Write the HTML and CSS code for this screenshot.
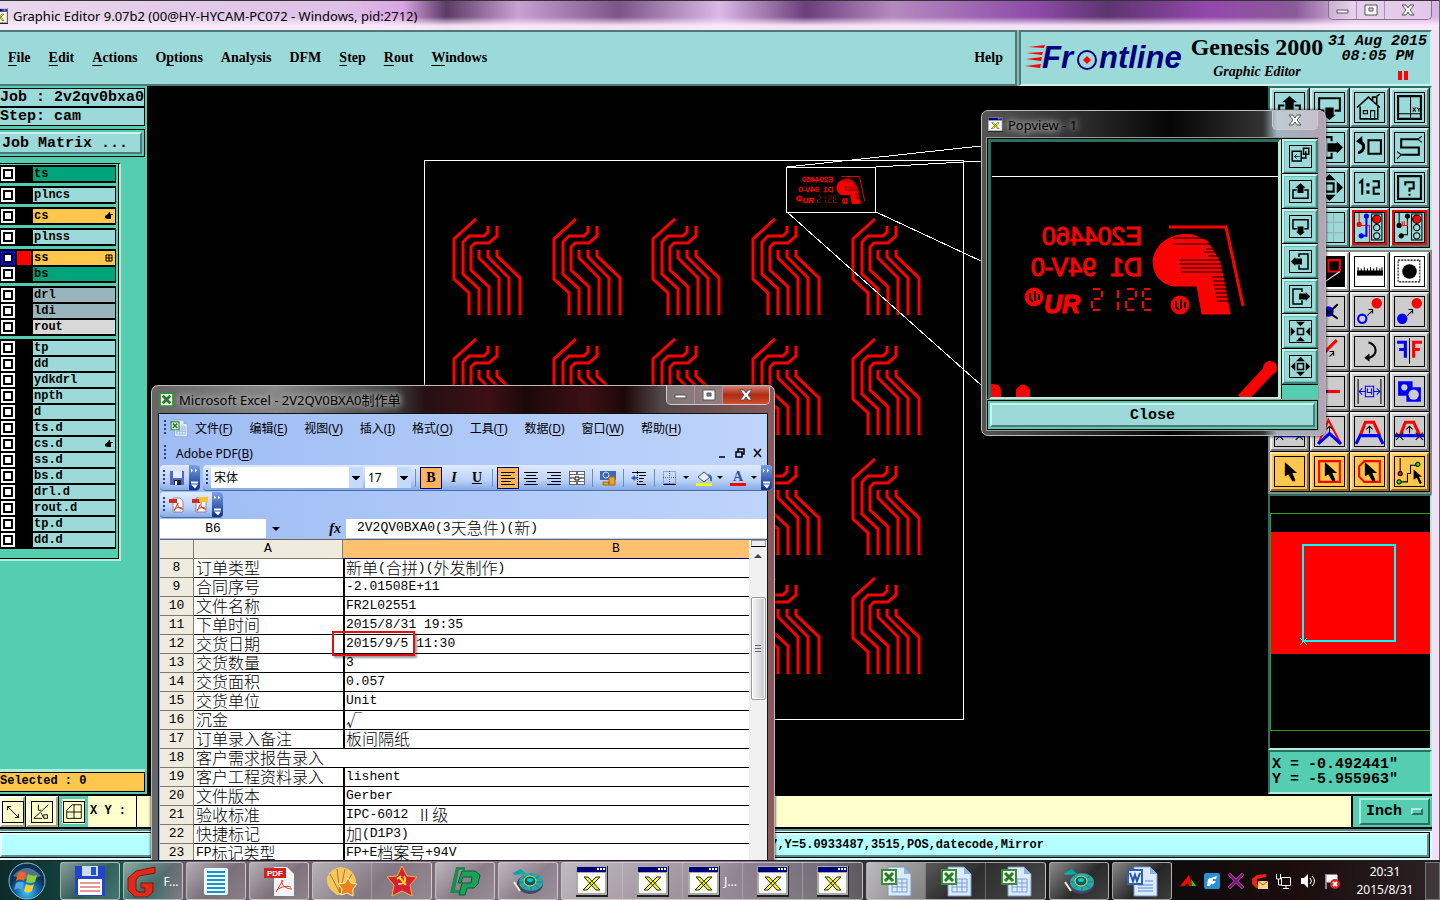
FILE: index.html
```html
<!DOCTYPE html>
<html lang="en">
<head>
    <meta charset="UTF-8">
    <meta name="viewport" content="width=device-width, initial-scale=1.0">
    <title>Graphic Editor 9.07b2</title>
    <link rel="stylesheet" href="styles.css">
</head>
<body>
    <!-- shared icons -->
    <svg class="defs" aria-hidden="true">
        <symbol id="pan-up" viewBox="0 0 28 28"><path d="M9 12H4v11h20V12h-5" fill="none" stroke="#000" stroke-width="2"/><path d="M14 3l7 6h-3v7h-8V9H7z"/></symbol>
        <symbol id="pan-down" viewBox="0 0 28 28"><path d="M9 17H4V5h20v12h-5" fill="none" stroke="#000" stroke-width="2"/><path d="M14 26l6-5h-2v-7h-8v7H8z"/></symbol>
        <symbol id="pan-left" viewBox="0 0 28 28"><path d="M12 8V4h12v20H12v-5" fill="none" stroke="#000" stroke-width="2"/><path d="M1 14l6-6v2h9v8H7v2z"/></symbol>
        <symbol id="pan-right" viewBox="0 0 28 28"><path d="M16 8V4H4v20h12v-5" fill="none" stroke="#000" stroke-width="2"/><path d="M27 14l-6-6v2h-9v8h9v2z"/></symbol>
        <symbol id="zoom-in" viewBox="0 0 28 28"><path d="M10 10h8v8h-8z" fill="none" stroke="#000" stroke-width="2"/><path d="M8 1h12l-6 6zM8 27h12l-6-6zM1 8v12l6-6zM27 8v12l-6-6z"/></symbol>
        <symbol id="zoom-out" viewBox="0 0 28 28"><path d="M10 10h8v8h-8z" fill="none" stroke="#000" stroke-width="2"/><path d="M8 7h12l-6-6zM8 21h12l-6 6zM7 8v12l-6-6zM21 8v12l6-6z"/></symbol>
        <symbol id="copy-view" viewBox="0 0 28 28"><path d="M3 7h12v13H3zM18 3h7v8h-7zM15 16h6v-9" fill="none" stroke="#000" stroke-width="2"/><path d="M6 14h7M9 11l-3 3 3 3" fill="none" stroke="#000"/></symbol>
        <symbol id="house" viewBox="0 0 28 28"><path d="M2 14L13 4l11 10M5 13v12h17V13M17 7V4h4v7M21 3l3-2" fill="none" stroke="#000" stroke-width="1.500"/><path d="M8 17h4v3H8zM15 17h4v8h-4z" fill="none" stroke="#000"/></symbol>
        <symbol id="xy-window" viewBox="0 0 28 28"><path d="M3 3h22v22H3z" fill="none" stroke="#000" stroke-width="2"/><path d="M15 3v22M3 20h22M17 14l3 4M20 14l-3 4M21 14l2 2 2-2M23 16v2" fill="none" stroke="#000"/></symbol>
        <symbol id="zoom-prev" viewBox="0 0 28 28"><path d="M13 7h12v13H13z" fill="none" stroke="#000" stroke-width="2"/><path d="M3 8c6-1 8 10 0 11M3 8h4" fill="none" stroke="#000" stroke-width="3"/><path d="M1 8l6-5v9z"/></symbol>
        <symbol id="serpentine" viewBox="0 0 28 28"><path d="M22 6H6v8h17v7H6" fill="none" stroke="#000" stroke-width="2"/><path d="M22 6l4-3M22 6l4 3M6 21l-4-3M6 21l-4 4" stroke="#000"/></symbol>
        <symbol id="ratio" viewBox="0 0 28 28"><path d="M4 10l3-3v14M17 8h6v6h-5v6h6" fill="none" stroke="#000" stroke-width="2"/><path d="M11 10h3v3h-3zM11 17h3v3h-3z"/></symbol>
        <symbol id="help" viewBox="0 0 28 28"><path d="M3 3h22v22H3zM10 12V9h8v6h-4v3M13 21h2" fill="none" stroke="#000" stroke-width="2"/></symbol>
        <symbol id="grid" viewBox="0 0 28 28"><path d="M8 0v28M18 0v28M0 9h28M0 19h28" stroke="#9aa"/></symbol>
        <symbol id="lamp-a" viewBox="0 0 28 28"><path d="M4 0v12H14v16" fill="none" stroke="red"/><path d="M11 4v18H7" fill="none" stroke="blue" stroke-width="2"/><circle cx="4" cy="11" r="2.500" fill="red"/><circle cx="11" cy="3" r="2.500" fill="blue"/><circle cx="6" cy="22" r="2.500" fill="blue"/><path d="M16 1h10v25H16z" fill="none" stroke="#000"/><circle cx="21" cy="6" r="4" fill="red" stroke="#000"/><circle cx="21" cy="14" r="3" fill="none" stroke="#000"/><circle cx="21" cy="22" r="3" fill="none" stroke="#000"/></symbol>
        <symbol id="lamp-b" viewBox="0 0 28 28"><path d="M4 0v12M12 3v18H7" fill="none" stroke="#000"/><circle cx="4" cy="12" r="2.500"/><circle cx="12" cy="3" r="2.500"/><circle cx="6" cy="22" r="2.500"/><path d="M7 8v4h5V8M9 8v4" stroke="red" fill="none"/><path d="M16 1h10v25H16z" fill="none" stroke="#000"/><circle cx="21" cy="6" r="4" fill="red" stroke="#000"/><circle cx="21" cy="14" r="3" fill="none" stroke="#000"/><circle cx="21" cy="22" r="3" fill="none" stroke="#000"/></symbol>
        <symbol id="popup-view" viewBox="0 0 28 28"><path d="M0 0h28v28H0z"/><path d="M13 3h11v11H13z" fill="none" stroke="red" stroke-width="2"/><path d="M8 25l16-11" stroke="#fff"/></symbol>
        <symbol id="ruler" viewBox="0 0 28 28"><path d="M2 13h25v5H2z"/><path d="M3 10v4M6 11v3M9 10v4M12 11v3M15 10v4M18 11v3M21 10v4M24 11v3M26 10v4" stroke="#000"/></symbol>
        <symbol id="pad" viewBox="0 0 28 28"><path d="M3 3h21v21H3z" fill="none" stroke="#000" stroke-dasharray="2 1"/><circle cx="14" cy="14" r="7"/></symbol>
        <symbol id="erase" viewBox="0 0 28 28"><circle cx="13" cy="14" r="5" fill="blue"/><path d="M4 8l18 13M22 7L7 21" stroke="#000" stroke-width="2"/></symbol>
        <symbol id="move-a" viewBox="0 0 28 28"><circle cx="7" cy="21" r="4" fill="none" stroke="blue" stroke-width="2"/><circle cx="21" cy="6" r="5" fill="red"/><path d="M12 18l5-5M13 12h4v4" fill="none" stroke="#000"/></symbol>
        <symbol id="move-b" viewBox="0 0 28 28"><circle cx="7" cy="21" r="5" fill="blue"/><circle cx="21" cy="6" r="5" fill="red"/><path d="M12 18l5-5M13 12h4v4" fill="none" stroke="#000"/></symbol>
        <symbol id="stretch" viewBox="0 0 28 28"><path d="M3 21l9-9" stroke="blue" stroke-width="3"/><path d="M11 13l10-10" stroke="red" stroke-width="3"/><path d="M14 19l4-4M14 14h4v4" stroke="#000" fill="none"/></symbol>
        <symbol id="rotate" viewBox="0 0 28 28"><path d="M13 5c9 3 9 12 1 15h-3" fill="none" stroke="#000" stroke-width="2"/><path d="M9 20l5-4v8z"/></symbol>
        <symbol id="mirror" viewBox="0 0 28 28"><path d="M2 5h8v15M4 12h6" fill="none" stroke="blue" stroke-width="3"/><path d="M26 5h-8v15M24 12h-6" fill="none" stroke="red" stroke-width="3"/><path d="M14 1v25" stroke="#000"/></symbol>
        <symbol id="segment" viewBox="0 0 28 28"><path d="M4 14h11" stroke="blue" stroke-width="3"/><path d="M12 14h12" stroke="red" stroke-width="3"/></symbol>
        <symbol id="spacing" viewBox="0 0 28 28"><path d="M3 2v24M25 2v24" stroke="#000"/><path d="M4 14h6M18 14h6M7 11l-3 3 3 3M21 11l3 3-3 3M10 9h8v10h-8zM12 11v4h4M16 11v6" fill="none" stroke="blue"/></symbol>
        <symbol id="merge" viewBox="0 0 28 28"><path d="M3 4h14v6h8v14H11v-6H3z" fill="blue"/><circle cx="9" cy="10" r="3" fill="#ccc"/><circle cx="18" cy="17" r="5" fill="#ccc"/></symbol>
        <symbol id="trace-a" viewBox="0 0 28 28"><path d="M3 26L13 3l12 23" fill="none" stroke="red" stroke-width="2"/><path d="M3 26l11-10 11 10" fill="none" stroke="blue" stroke-width="3"/><path d="M14 9v6M11 12l3-3 3 3" fill="none" stroke="#000"/></symbol>
        <symbol id="trace-b" viewBox="0 0 28 28"><path d="M5 18l5-13h8l6 13" fill="none" stroke="red" stroke-width="3"/><path d="M1 26l4-8h18l4 8" fill="none" stroke="blue" stroke-width="3"/><path d="M14 9v7M11 12l3-3 3 3" fill="none" stroke="#000"/></symbol>
        <symbol id="trace-c" viewBox="0 0 28 28"><path d="M5 18l5-13h8l6 13" fill="none" stroke="red" stroke-width="3"/><path d="M0 18h28" stroke="blue" stroke-width="3"/><path d="M14 9v7M11 12l3-3 3 3M1 15l7 7M8 15l-7 7M20 15l7 7M27 15l-7 7" fill="none" stroke="#000"/></symbol>
        <symbol id="cursor" viewBox="0 0 28 28"><path d="M10 6v12l3-2 4 7h2v-1l-3-7h4z" stroke="#000"/></symbol>
        <symbol id="cursor-rect" viewBox="0 0 28 28"><path d="M4 4h20v20H4z" fill="none" stroke="red" stroke-width="2"/><use href="#cursor"/></symbol>
        <symbol id="cursor-poly" viewBox="0 0 28 28"><path d="M9 4h15v20H9l-5-5V9z" fill="none" stroke="red" stroke-width="2"/><use href="#cursor"/></symbol>
        <symbol id="cursor-net" viewBox="0 0 28 28"><path d="M5 1v15M4 24h8v-8h3V8h7" fill="none" stroke="#000"/><circle cx="5" cy="16" r="2" fill="red" stroke="#000"/><circle cx="4" cy="24" r="2" fill="#0f0" stroke="#000"/><circle cx="22" cy="7" r="2" fill="#0f0" stroke="#000"/><path d="M18 12v10l3-2 3 6 2-1-3-6h3z"/></symbol>
        <symbol id="x-app" viewBox="0 0 32 30"><path d="M0 0h32v30H0z" fill="#aaa"/><path d="M32 0v30H0" fill="none" stroke="#222" stroke-width="2"/><path d="M1 1h29v5H1z" fill="#00007c"/><path d="M21 2h2v2h-2zM24 2h2v2h-2zM27 2h2v2h-2z" fill="#fff"/><path d="M2 7h27v20H2z" fill="#fff"/><path d="M8 11h4l12 13h-4zM20 11h4L11 24H7z" fill="#ff0" stroke="#222"/></symbol>
        <symbol id="excel-app" viewBox="0 0 32 32"><path d="M8 2h16l7 7v22H8z" fill="#dcebfb" stroke="#7796c4"/><path d="M24 2v7h7z" fill="#8fb2df"/><path d="M12 14h15v13H12zM12 18h15M12 22h15M17 14v13M22 14v13" fill="none" stroke="#7aa0d8"/><path d="M1 4h16v16H1z" fill="#3c8a3c"/><path d="M3 6h12v12H3z" fill="#e8f5e4"/><path d="M5 8l8 8M13 8l-8 8" stroke="#2a7a2c" stroke-width="3"/></symbol>
        <symbol id="pot-app" viewBox="0 0 32 32"><ellipse cx="18" cy="19" rx="13" ry="10" fill="#446"/><ellipse cx="19" cy="17" rx="12" ry="9" fill="#2aa7a7"/><path d="M19 8v18M7 17h24M11 11l16 12M27 11L11 23" stroke="#1a8088"/><ellipse cx="18" cy="16" rx="6" ry="5" fill="#075a66" stroke="#e8e04a"/><ellipse cx="18" cy="15" rx="3" ry="2" fill="#0cc"/><path d="M1 8l8-4 5 5-12 1z" fill="#0aa"/><path d="M2 17l6 9" stroke="#eec" stroke-width="2"/></symbol>
        <symbol id="pdf-page" viewBox="0 0 16 16"><path d="M4 1h7l3 3v11H4z" fill="#fff" stroke="#889"/><path d="M0 2h8v4H0z" fill="#d22"/><path d="M5 14l4-8M9 6c-1 4 2 6 5 6M5 13c3-3 6-3 8-2" fill="none" stroke="#d22"/></symbol>
        <symbol id="hand" viewBox="0 0 8 8"><path d="M0 4l3-2 1-2h1v2h3v1H6v4H2L0 6z"/></symbol>
        <symbol id="more" viewBox="0 0 11 24"><path d="M2 3l2 2-2 2zM6 3l2 2-2 2zM2 16h7v2H2zM2 19h7l-3 4z" fill="#fff"/></symbol>
        <symbol id="trace" viewBox="452 218 72 98"><g fill="none" stroke="red" stroke-width="3"><path d="M476 219l-22 20v40l15 14v22"/><path d="M488 226v6l-4 4h-15l-6 6v32l16 15v26"/><path d="M497 226v10l-8 7h-14l-4 4v23l18 17v28"/><path d="M479 250v8l20 20v37"/><path d="M488 250v7l21 21v37"/><path d="M497 250v6l23 22v37"/></g></symbol>
        <symbol id="mark" viewBox="1020 222 230 96">
            <g fill="red" stroke="red">
                <text class="mark-text" transform="translate(1142 245) scale(-1 1)">E204460</text>
                <text class="mark-text" transform="translate(1142 276) scale(-1 1)">D1&#160; 94V-0</text>
                <text class="mark-ur" x="1044" y="313">UR</text>
                <path d="M1169 227h57l17 79" fill="none" stroke-width="3"/>
                <path d="M1175 236q8-3 18-1l14 6 6 9 7 12 5 25 5 27h-28l-5-28h-24q-20-4-20-26 3-18 22-24z"/>
                <circle cx="1034" cy="297" r="9"/><circle cx="1180" cy="305" r="9"/>
                <path d="M1093 289h7M1102 291v6M1094 299h6M1092 301v7M1093 310h7M1118 290v8M1118 302v8M1127 289h7M1136 291v6M1128 299h6M1126 301v7M1127 310h7M1144 289h6M1143 291v6M1145 299h6M1143 301v7M1144 310h7" fill="none" stroke-width="2"/>
            </g>
            <path d="M1173 238h30M1174 244h36M1206 249h12M1204 252h16M1208 256h14M1179 260h42M1179 264h43M1181 268h42M1181 272h42M1212 277h14M1213 281h14M1213 285h15M1214 289h15M1215 293h15M1216 297h15M1217 301h15" stroke="#000" stroke-width="1"/>
            <path d="M1030 293v6l3 3M1035 291v10M1039 294v6M1176 301v6l3 3M1181 299v10M1185 302v6" fill="none" stroke="#000" stroke-width="2"/>
        </symbol>
    </svg>

    <main class="editor">
        <header class="titlebar">
            <svg class="title-icon"><use href="#x-app"/></svg>
            <span>Graphic Editor 9.07b2 (00@HY-HYCAM-PC072 - Windows, pid:2712)</span>
            <div class="win-buttons">
                <button aria-label="Minimize"><svg viewBox="0 0 14 12"><path d="M1 6h11v3H1z"/></svg></button>
                <button aria-label="Maximize"><svg viewBox="0 0 14 12"><path fill-rule="evenodd" d="M1 1h12v10H1zM5 4h4v3H5z"/></svg></button>
                <button class="wide" aria-label="Close"><svg viewBox="0 0 14 12"><path d="M1 1h4l2 3 2-3h4L9 6l4 5H9L7 8l-2 3H1l4-5z"/></svg></button>
            </div>
        </header>
        <div class="top">
            <nav class="menubar">
                <a href="#"><u>F</u>ile</a><a href="#"><u>E</u>dit</a><a href="#"><u>A</u>ctions</a><a href="#">O<u>p</u>tions</a><a href="#">Analysis</a><a href="#">DFM</a><a href="#"><u>S</u>tep</a><a href="#"><u>R</u>out</a><a href="#"><u>W</u>indows</a>
                <a class="menu-help" href="#">Help</a>
            </nav>
            <section class="brand">
                <svg class="logo" viewBox="0 0 162 30">
                    <path d="M3 4l17-2-1 3zM1 10l17-1-1 3zM1 16l16-2-1 4zM0 23l16-2-1 4z" fill="red"/>
                    <text x="17" y="25">Fr</text><text x="74" y="25">ntline</text>
                    <circle cx="62" cy="17" r="9" fill="none" stroke="#00007c" stroke-width="2"/>
                    <path d="M62 13l4 4-4 4-4-4z" fill="red"/>
                </svg>
                <div class="product">
                    <strong>Genesis 2000</strong>
                    <em>Graphic Editor</em>
                </div>
                <div class="clock">
                    <span>31 Aug 2015</span>
                    <span>08:05 PM</span>
                    <i class="pause"></i>
                </div>
            </section>
        </div>

        <div class="workspace">
            <aside class="left">
                <div class="job">Job : 2v2qv0bxa0</div>
                <div class="job">Step: cam</div>
                <div class="matrix"><button>Job Matrix ...</button></div>
                <div class="layers">
                    <ul class="group">
                        <li><input type="checkbox" id="ts"><i></i><label class="green" for="ts">ts</label></li>
                    </ul>
                    <ul class="group">
                        <li><input type="checkbox" id="plncs"><i></i><label for="plncs">plncs</label></li>
                    </ul>
                    <ul class="group">
                        <li><input type="checkbox" id="cs"><i></i><label class="gold" for="cs">cs<svg><use href="#hand"/></svg></label></li>
                    </ul>
                    <ul class="group">
                        <li><input type="checkbox" id="plnss"><i></i><label for="plnss">plnss</label></li>
                    </ul>
                    <ul class="group">
                        <li><input type="checkbox" id="ss" checked><i class="red"></i><label class="gold" for="ss">ss<svg viewBox="0 0 8 8"><path d="M1 1h6v6H1zM4 1v6M1 4h6" fill="none" stroke="#000"/></svg></label></li>
                        <li><input type="checkbox" id="bs"><i></i><label class="green" for="bs">bs</label></li>
                    </ul>
                    <ul class="group">
                        <li><input type="checkbox" id="drl"><i></i><label class="slate" for="drl">drl</label></li>
                        <li><input type="checkbox" id="ldi"><i></i><label class="slate" for="ldi">ldi</label></li>
                        <li><input type="checkbox" id="rout"><i></i><label class="silver" for="rout">rout</label></li>
                    </ul>
                    <ul class="group">
                        <li><input type="checkbox" id="tp"><i></i><label for="tp">tp</label></li>
                        <li><input type="checkbox" id="dd"><i></i><label for="dd">dd</label></li>
                        <li><input type="checkbox" id="ydkdrl"><i></i><label for="ydkdrl">ydkdrl</label></li>
                        <li><input type="checkbox" id="npth"><i></i><label for="npth">npth</label></li>
                        <li><input type="checkbox" id="d"><i></i><label for="d">d</label></li>
                        <li><input type="checkbox" id="ts-d"><i></i><label for="ts-d">ts.d</label></li>
                        <li><input type="checkbox" id="cs-d"><i></i><label for="cs-d">cs.d<svg><use href="#hand"/></svg></label></li>
                        <li><input type="checkbox" id="ss-d"><i></i><label for="ss-d">ss.d</label></li>
                        <li><input type="checkbox" id="bs-d"><i></i><label for="bs-d">bs.d</label></li>
                        <li><input type="checkbox" id="drl-d"><i></i><label for="drl-d">drl.d</label></li>
                        <li><input type="checkbox" id="rout-d"><i></i><label for="rout-d">rout.d</label></li>
                        <li><input type="checkbox" id="tp-d"><i></i><label for="tp-d">tp.d</label></li>
                        <li><input type="checkbox" id="dd-d"><i></i><label for="dd-d">dd.d</label></li>
                    </ul>
                </div>
                <div class="selected">Selected : 0</div>
            </aside>

            <section class="canvas">
                <svg viewBox="147 86 1121 708" preserveAspectRatio="xMinYMin slice">
                    <g class="panel-row">
                        <use href="#trace" x="452" y="218" width="72" height="98"/><use href="#trace" x="552" y="218" width="72" height="98"/><use href="#trace" x="651" y="218" width="72" height="98"/><use href="#trace" x="751" y="218" width="72" height="98"/><use href="#trace" x="851" y="218" width="72" height="98"/>
                    </g>
                    <g class="panel-row">
                        <use href="#trace" x="452" y="338" width="72" height="98"/><use href="#trace" x="552" y="338" width="72" height="98"/><use href="#trace" x="651" y="338" width="72" height="98"/><use href="#trace" x="751" y="338" width="72" height="98"/><use href="#trace" x="851" y="338" width="72" height="98"/>
                    </g>
                    <g class="panel-row">
                        <use href="#trace" x="751" y="458" width="72" height="98"/><use href="#trace" x="851" y="458" width="72" height="98"/>
                        <use href="#trace" x="751" y="577" width="72" height="98"/><use href="#trace" x="851" y="577" width="72" height="98"/>
                    </g>
                    <use href="#mark" x="795" y="175" width="72" height="30"/>
                    <g fill="none" stroke="#fff" shape-rendering="crispEdges">
                        <path d="M424.500 160.500h539v559h-539z"/>
                        <path d="M786.500 167.500h89v45h-89z"/>
                        <path d="M787 167l194-21M876 167l105-6M876 212l105 49M787 212l194 173"/>
                    </g>
                </svg>
            </section>

            <aside class="right">
                <div class="tools cyan">
                    <button aria-label="Pan up"><svg><use href="#pan-up"/></svg></button>
                    <button aria-label="Pan down"><svg><use href="#pan-down"/></svg></button>
                    <button aria-label="Home"><svg><use href="#house"/></svg></button>
                    <button aria-label="Window XY"><svg><use href="#xy-window"/></svg></button>
                    <button aria-label="Pan left"><svg><use href="#pan-left"/></svg></button>
                    <button aria-label="Pan right"><svg><use href="#pan-right"/></svg></button>
                    <button aria-label="Previous zoom"><svg><use href="#zoom-prev"/></svg></button>
                    <button aria-label="Serpentine"><svg><use href="#serpentine"/></svg></button>
                    <button aria-label="Zoom in"><svg><use href="#zoom-in"/></svg></button>
                    <button aria-label="Zoom out"><svg><use href="#zoom-out"/></svg></button>
                    <button aria-label="Scale 1:2"><svg><use href="#ratio"/></svg></button>
                    <button aria-label="Help"><svg><use href="#help"/></svg></button>
                    <button aria-label="Snap"><svg><use href="#grid"/></svg></button>
                    <button aria-label="Grid"><svg><use href="#grid"/></svg></button>
                    <button class="alert" aria-label="Nets"><svg><use href="#lamp-a"/></svg></button>
                    <button class="alert" aria-label="Spacing check"><svg><use href="#lamp-b"/></svg></button>
                </div>
                <div class="tools gray">
                    <button class="white" aria-label="Popup"><svg><use href="#popup-view"/></svg></button>
                    <button class="white" aria-label="Popup view"><svg><use href="#popup-view"/></svg></button>
                    <button class="white" aria-label="Measure"><svg><use href="#ruler"/></svg></button>
                    <button class="white" aria-label="Feature"><svg><use href="#pad"/></svg></button>
                    <button aria-label="Delete"><svg><use href="#erase"/></svg></button>
                    <button aria-label="Erase"><svg><use href="#erase"/></svg></button>
                    <button aria-label="Copy"><svg><use href="#move-a"/></svg></button>
                    <button aria-label="Move"><svg><use href="#move-b"/></svg></button>
                    <button aria-label="Stretch line"><svg><use href="#stretch"/></svg></button>
                    <button aria-label="Stretch"><svg><use href="#stretch"/></svg></button>
                    <button aria-label="Rotate"><svg><use href="#rotate"/></svg></button>
                    <button aria-label="Mirror"><svg><use href="#mirror"/></svg></button>
                    <button aria-label="Break"><svg><use href="#segment"/></svg></button>
                    <button aria-label="Segment"><svg><use href="#segment"/></svg></button>
                    <button aria-label="Spacing"><svg><use href="#spacing"/></svg></button>
                    <button aria-label="Merge"><svg><use href="#merge"/></svg></button>
                    <button aria-label="Angle"><svg><use href="#trace-c"/></svg></button>
                    <button aria-label="Corner"><svg><use href="#trace-a"/></svg></button>
                    <button aria-label="Parallel"><svg><use href="#trace-b"/></svg></button>
                    <button aria-label="Slide"><svg><use href="#trace-c"/></svg></button>
                    <button class="gold" aria-label="Select"><svg><use href="#cursor"/></svg></button>
                    <button class="gold" aria-label="Select in frame"><svg><use href="#cursor-rect"/></svg></button>
                    <button class="gold" aria-label="Select in polygon"><svg><use href="#cursor-poly"/></svg></button>
                    <button class="gold" aria-label="Select net"><svg><use href="#cursor-net"/></svg></button>
                </div>
                <div class="overview">
                    <svg viewBox="0 0 160 252" preserveAspectRatio="none">
                        <path d="M0 36h160v122H0z" fill="red"/>
                        <path d="M160 17.500H.5v217H160" fill="none" stroke="#3c9a0a"/>
                        <path d="M33 49h92v96H33z" fill="none" stroke="#0ff" stroke-width="2"/>
                        <path d="M30 142l7 7M37 142l-7 7" stroke="#0ff"/>
                    </svg>
                </div>
                <div class="coords"><span>X = -0.492441"</span><span>Y = -5.955963"</span></div>
            </aside>
        </div>

        <div class="command">
            <button aria-label="Vector"><svg viewBox="0 0 22 22"><path d="M5 5l12 12M5 9V5h4M17 13v4h-4" fill="none" stroke="#000"/></svg></button>
            <button aria-label="Angle"><svg viewBox="0 0 22 22"><path d="M2 18L18 3M2 18h9M7 3v6h3M10 12l3 6M13 14h4v4h-4z" fill="none" stroke="#000"/></svg></button>
            <button class="on" aria-label="Grid snap"><svg viewBox="0 0 22 22"><path d="M3 18V9l6-6h10v15zM11 3v15M3 11h16" fill="none" stroke="#000"/></svg></button>
            <label for="xy">X Y :</label>
            <input id="xy" type="text">
            <div class="units">
                <button>Inch <i></i></button>
            </div>
        </div>
        <div class="status"><output>17,Y=5.0933487,3515,POS,datecode,Mirror</output></div>
    </main>

    <section class="popview">
        <header>
            <svg class="app-icon"><use href="#x-app"/></svg>
            <span>Popview - 1</span>
            <button class="glass-close" aria-label="Close popview"><svg viewBox="0 0 14 12"><path d="M1 1h4l2 3 2-3h4L9 6l4 5H9L7 8l-2 3H1l4-5z"/></svg></button>
        </header>
        <div class="pop-body">
            <div class="pop-canvas">
                <svg viewBox="991 142 287 255" preserveAspectRatio="xMinYMin slice">
                    <path d="M992 176.500h286" stroke="#fff"/>
                    <use href="#mark" x="1020" y="222" width="230" height="96"/>
                    <path d="M991 397v-13q10-1 10 7v6zM1016 397v-7q7-11 14 0v7z" fill="red"/>
                    <path d="M1242 399l28-30" stroke="red" stroke-width="11"/><circle cx="1270" cy="368" r="7" fill="red"/>
                </svg>
            </div>
            <div class="pop-tools">
                <button aria-label="Copy view"><svg><use href="#copy-view"/></svg></button>
                <button aria-label="Up"><svg><use href="#pan-up"/></svg></button>
                <button aria-label="Down"><svg><use href="#pan-down"/></svg></button>
                <button aria-label="Left"><svg><use href="#pan-left"/></svg></button>
                <button aria-label="Right"><svg><use href="#pan-right"/></svg></button>
                <button aria-label="In"><svg><use href="#zoom-in"/></svg></button>
                <button aria-label="Out"><svg><use href="#zoom-out"/></svg></button>
            </div>
        </div>
        <div class="pop-close"><button>Close</button></div>
    </section>

    <section class="excel" lang="zh-CN">
        <header>
            <svg class="app-icon" viewBox="0 0 16 16"><path d="M0 0h16v16H0z" fill="#3c8a3c"/><path d="M2 2h12v12H2z" fill="#e8f5e4"/><path d="M4 4l8 8M12 4l-8 8" stroke="#2a7a2c" stroke-width="3"/></svg>
            <span>Microsoft Excel - 2V2QV0BXA0制作单</span>
            <div class="win-buttons">
                <button aria-label="最小化"><svg viewBox="0 0 14 12"><path d="M1 6h11v3H1z"/></svg></button>
                <button aria-label="最大化"><svg viewBox="0 0 14 12"><path fill-rule="evenodd" d="M1 1h12v10H1zM5 4h4v3H5z"/></svg></button>
                <button class="wide" aria-label="关闭"><svg viewBox="0 0 14 12"><path d="M1 1h4l2 3 2-3h4L9 6l4 5H9L7 8l-2 3H1l4-5z"/></svg></button>
            </div>
        </header>
        <div class="excel-body">
            <nav class="excel-menu">
                <i class="grip"></i>
                <svg class="book" viewBox="0 0 32 32"><use href="#excel-app"/></svg>
                <a href="#">文件(<u>F</u>)</a><a href="#">编辑(<u>E</u>)</a><a href="#">视图(<u>V</u>)</a><a href="#">插入(<u>I</u>)</a><a href="#">格式(<u>O</u>)</a><a href="#">工具(<u>T</u>)</a><a href="#">数据(<u>D</u>)</a><a href="#">窗口(<u>W</u>)</a><a href="#">帮助(<u>H</u>)</a>
            </nav>
            <div class="excel-menu second">
                <i class="grip"></i>
                <a href="#">Adobe PDF(<u>B</u>)</a>
                <svg class="mdi" viewBox="0 0 46 12"><path d="M3 10h6M20 5h6v5h-6zM22 5V2h6v5h-2" fill="none" stroke="#000" stroke-width="1.500"/><path d="M38 2l7 8M45 2l-7 8" stroke="#000" stroke-width="1.500"/></svg>
            </div>
            <div class="bars">
                <div class="bar">
                    <i class="grip"></i>
                    <button aria-label="保存"><svg viewBox="0 0 16 16"><path d="M1 1h14v14H1z" fill="#5566c8"/><path d="M4 1h9v7H4z" fill="#e6ecff"/><path d="M5 10h7v5H5z" fill="#223"/><path d="M6 11h2v4H6z" fill="#fff"/></svg></button>
                    <svg class="more"><use href="#more"/></svg>
                </div>
                <div class="bar grow">
                    <i class="grip"></i>
                    <select class="font" aria-label="字体"><option>宋体</option></select>
                    <select class="size" aria-label="字号"><option>17</option></select>
                    <i class="sep"></i>
                    <button class="on serif"><b>B</b></button>
                    <button class="serif"><em>I</em></button>
                    <button class="serif"><u>U</u></button>
                    <i class="sep"></i>
                    <button class="on" aria-label="左对齐"><svg viewBox="0 0 16 16"><path d="M1 2.500h14M1 5.500h10M1 8.500h14M1 11.500h10M1 14.500h14" stroke="#000"/></svg></button>
                    <button aria-label="居中"><svg viewBox="0 0 16 16"><path d="M1 2.500h14M3 5.500h10M1 8.500h14M3 11.500h10M1 14.500h14" stroke="#000"/></svg></button>
                    <button aria-label="右对齐"><svg viewBox="0 0 16 16"><path d="M1 2.500h14M5 5.500h10M1 8.500h14M5 11.500h10M1 14.500h14" stroke="#000"/></svg></button>
                    <button aria-label="合并居中"><svg viewBox="0 0 16 16"><path d="M0 1h16v14H0z" fill="#667"/><path d="M1 2h6v2H1zM9 2h6v2H9zM1 12h6v2H1zM9 12h6v2H9zM1 5h14v6H1z" fill="#fff"/><path d="M1 8h4M11 8h4M6 7h4v3H6z" fill="none" stroke="#000"/></svg></button>
                    <i class="sep"></i>
                    <button aria-label="货币"><svg viewBox="0 0 16 16"><path d="M0 1h16v9H0z" fill="#3b69b5"/><circle cx="6" cy="5" r="3" fill="none" stroke="#cde"/><path d="M9 7h6v8H9zM3 12h6v3H3z" fill="#e7a32b" stroke="#a66a10"/></svg></button>
                    <i class="sep"></i>
                    <button aria-label="缩进"><svg viewBox="0 0 16 16"><path d="M1 2.500h14M8 5.500h7M8 8.500h5M8 11.500h4M6 14.500h9" stroke="#000"/><path d="M6.500 1v14" stroke="#000" stroke-dasharray="1 1"/><path d="M0 8l4-3v2h2v2H4v2z" fill="#2766c9"/></svg></button>
                    <i class="sep"></i>
                    <button class="drop" aria-label="边框"><svg viewBox="0 0 16 16"><path d="M1.500 1.500h12v12h-12zM7.500 1v13M1 7.500h13" fill="none" stroke="#668" stroke-dasharray="1 1"/><path d="M1 14.500h13" stroke="#000"/></svg></button>
                    <button class="drop" aria-label="填充颜色"><svg viewBox="0 0 16 16"><path d="M2 7l6-5 6 5-6 5z" fill="#e8eef8" stroke="#456"/><path d="M12 5q4 1 3 6" stroke="#36c" stroke-width="2" fill="none"/><path d="M0 13h16v3H0z" fill="#ff0"/></svg></button>
                    <button class="drop serif-a" aria-label="字体颜色"><span>A</span></button>
                    <svg class="more"><use href="#more"/></svg>
                </div>
            </div>
            <div class="bars">
                <div class="bar">
                    <i class="grip"></i>
                    <button aria-label="转换为 PDF"><svg><use href="#pdf-page"/></svg></button>
                    <button aria-label="转换并注释"><svg viewBox="0 0 16 16"><use href="#pdf-page"/><path d="M7 0h9v5h-5l-3 3V5H7z" fill="#f5c32c"/></svg></button>
                    <svg class="more"><use href="#more"/></svg>
                </div>
            </div>
            <div class="formula">
                <input class="name-box" type="text" value="B6" aria-label="名称框">
                <i class="arrow"></i>
                <em>fx</em>
                <div class="formula-text">2V2QV0BXA0(3<span class="zh">天急件</span>)(<span class="zh">新</span>)</div>
            </div>
            <div class="sheet">
                <table>
                    <thead><tr><th class="num"></th><th class="col-a">A</th><th class="col-b">B</th></tr></thead>
                    <tbody>
                        <tr><th>8</th><td><span class="zh">订单类型</span></td><td><span class="zh">新单</span>(<span class="zh">合拼</span>)(<span class="zh">外发制作</span>)</td></tr>
                        <tr><th>9</th><td><span class="zh">合同序号</span></td><td>-2.01508E+11</td></tr>
                        <tr><th>10</th><td><span class="zh">文件名称</span></td><td>FR2L02551</td></tr>
                        <tr><th>11</th><td><span class="zh">下单时间</span></td><td>2015/8/31 19:35</td></tr>
                        <tr><th>12</th><td><span class="zh">交货日期</span></td><td class="marked">2015/9/5 11:30</td></tr>
                        <tr><th>13</th><td><span class="zh">交货数量</span></td><td>3</td></tr>
                        <tr><th>14</th><td><span class="zh">交货面积</span></td><td>0.057</td></tr>
                        <tr><th>15</th><td><span class="zh">交货单位</span></td><td>Unit</td></tr>
                        <tr><th>16</th><td><span class="zh">沉金</span></td><td><span class="zh">√</span></td></tr>
                        <tr><th>17</th><td><span class="zh">订单录入备注</span></td><td><span class="zh">板间隔纸</span></td></tr>
                        <tr><th>18</th><td colspan="2"><span class="zh">客户需求报告录入</span></td></tr>
                        <tr><th>19</th><td><span class="zh">客户工程资料录入</span></td><td>lishent</td></tr>
                        <tr><th>20</th><td><span class="zh">文件版本</span></td><td>Gerber</td></tr>
                        <tr><th>21</th><td><span class="zh">验收标准</span></td><td>IPC-6012 <span class="zh">Ⅱ级</span></td></tr>
                        <tr><th>22</th><td><span class="zh">快捷标记</span></td><td><span class="zh">加</span>(D1P3)</td></tr>
                        <tr><th>23</th><td>FP<span class="zh">标记类型</span></td><td>FP+E<span class="zh">档案号</span>+94V</td></tr>
                    </tbody>
                </table>
                <div class="scroll"><i class="split"></i><i class="up"></i><i class="thumb"></i></div>
            </div>
        </div>
    </section>

    <footer class="taskbar">
        <button class="start" aria-label="Start"><svg viewBox="0 0 38 38"><defs><radialGradient id="orb" cx=".5" cy=".8"><stop offset="0" stop-color="#4cf"/><stop offset=".6" stop-color="#1668a8"/><stop offset="1" stop-color="#0b3358"/></radialGradient></defs><circle cx="19" cy="19" r="18" fill="url(#orb)" stroke="#8bc"/><path d="M5 14q14-16 28 0q-14 6-28 0z" fill="#fff" opacity=".3"/><path d="M10 11q4-3 8 0l-2 8q-4-3-8 0z" fill="#f0642c"/><path d="M20 12q4 3 9 1l-2 7q-4 2-9 0z" fill="#8ccf3c"/><path d="M8 21q4-3 8 0l-2 7q-4-3-8 0z" fill="#4ba7ee"/><path d="M18 22q4 3 8 0l-2 7q-4 3-8 0z" fill="#ffd02c"/></svg></button>
        <div class="task"><button aria-label="Save"><svg viewBox="0 0 32 32"><path d="M1 1h30v30H4l-3-3z" fill="#2244cc"/><path d="M8 1h16v10H8z" fill="#cde"/><path d="M17 2h5v8h-5z" fill="#25c"/><path d="M4 14h24v16H4z" fill="#fff"/><path d="M6 18h20M6 22h20M6 26h20" stroke="#c33"/></svg></button></div>
        <div class="task"><button><svg viewBox="0 0 32 32"><path d="M28 2v6L12 11l-3 4v10l3 2h6v-4h-4v-5h12v9l-6 5H8l-7-7V13l8-7z" fill="#e02a1a" stroke="#8a1008"/></svg>F...</button></div>
        <div class="task"><button aria-label="Notes"><svg viewBox="0 0 32 32"><rect x="4" y="3" width="24" height="27" rx="2" fill="#e8f8ff"/><path d="M7 7h18M7 11h18M7 15h18M7 19h18M7 23h18M7 27h18" stroke="#1b94c6" stroke-width="2"/></svg></button></div>
        <div class="task"><button aria-label="PDF"><svg viewBox="0 0 32 32"><path d="M11 2h13l7 7v22H11z" fill="#f4f4f4"/><path d="M1 3h22v10H1z" fill="#d41f1f"/><text class="pdf-tag" x="4" y="11">PDF</text><path d="M13 27l7-12M19 15c-1 7 6 9 10 9M14 25c5-4 10-4 14-3" fill="none" stroke="#e33"/></svg></button></div>
        <div class="task">
            <button aria-label="Shell"><svg viewBox="0 0 32 32"><path d="M15 2q14 2 15 15L18 30h-7Q-1 22 1 12 5 3 15 2z" fill="#f3c862"/><path d="M14 28L4 9M14 28L11 4M14 28L19 4M14 28L26 9" stroke="#b9741c"/><path d="M22 13l3 5 6 1-4 5v7l-6-3-6 2 1-6-4-5 7-1z" fill="#e88420" stroke="#fff0b0"/></svg></button>
            <button aria-label="Star"><svg viewBox="0 0 32 32"><path d="M16 1l5 10 10 1-7 8 2 11-10-5-10 5 2-11-7-8 10-1z" fill="#d81e3a" stroke="#f7b52c"/><path d="M13 12l7 8M18 11q4 8-6 8M11 14l4-3" fill="none" stroke="#fd2" stroke-width="2"/></svg></button>
        </div>
        <div class="task"><button aria-label="Foxit"><svg viewBox="0 0 32 32"><path d="M7 2h9v3h-6L6 25h6l-1 3H1z" fill="#1f8a50"/><path d="M13 6h13l5 4-2 9-4 4h-7l-2 7h-6l3-12h9l1-6h-9l-2 6h-3z" fill="#18a25a" stroke="#0a5a30"/></svg></button></div>
        <div class="task"><button aria-label="Genesis"><svg><use href="#pot-app"/></svg></button></div>
        <div class="task five">
            <button aria-label="Editor 1"><svg><use href="#x-app"/></svg></button>
            <button aria-label="Editor 2"><svg><use href="#x-app"/></svg></button>
            <button><svg><use href="#x-app"/></svg>J...</button>
            <button aria-label="Editor 4"><svg><use href="#x-app"/></svg></button>
            <button aria-label="Editor 5"><svg><use href="#x-app"/></svg></button>
        </div>
        <div class="task three">
            <button class="active" aria-label="Excel 1"><svg><use href="#excel-app"/></svg></button>
            <button aria-label="Excel 2"><svg><use href="#excel-app"/></svg></button>
            <button aria-label="Excel 3"><svg><use href="#excel-app"/></svg></button>
        </div>
        <div class="task dark"><button aria-label="Genesis tools"><svg><use href="#pot-app"/></svg></button></div>
        <div class="task dark"><button aria-label="Word"><svg viewBox="0 0 32 32"><path d="M8 2h16l7 7v22H8z" fill="#dcebfb" stroke="#7796c4"/><path d="M24 2v7h7z" fill="#8fb2df"/><path d="M12 20h15M12 23h15M12 26h15M19 16h8" stroke="#5a86c8"/><path d="M1 4h16v16H1z" fill="#2f5fb8"/><path d="M3 6h12v12H3z" fill="#e4edfb"/><path d="M4 8l3 8 2-6 2 6 3-8" fill="none" stroke="#2452a8" stroke-width="2"/></svg></button></div>
        <div class="tray">
            <svg viewBox="0 0 16 16"><path d="M0 13L9 2l1 4-5 7z" fill="red"/><path d="M9 2l3 11H9L7 7z" fill="red"/><path d="M11 6l5 7h-4z" fill="#0e0"/></svg>
            <svg viewBox="0 0 16 16"><rect width="16" height="16" rx="2" fill="#2a8fd0"/><path d="M4 6l9-3-1 3H9v2h3l-2 3H7l-1 2H3z" fill="#fff"/></svg>
            <svg viewBox="0 0 16 16"><path d="M1 1l14 14M15 1L1 15" stroke="#d9c" stroke-width="3"/><path d="M1 1l14 14M15 1L1 15" stroke="#808" stroke-width="2"/></svg>
            <svg viewBox="0 0 16 16"><path d="M14 1v3L5 6v6h4v3H4l-4-4V6l5-4z" fill="#e21"/><path d="M6 8h10v8H6z" fill="#f3d48a"/><path d="M6 8l5 4 5-4" fill="none" stroke="#a60"/></svg>
            <svg viewBox="0 0 16 16"><path d="M5.500 4.500h9v8h-9zM7 15.500h6M10 12v3M.5 1v5h4V1M2.500 6v6h3" fill="none" stroke="#fff"/></svg>
            <svg viewBox="0 0 16 16"><path d="M1 5h3l4-4v14l-4-4H1z" fill="#fff"/><path d="M10 5q3 3 0 6M12 3q5 5 0 10" fill="none" stroke="#fff"/></svg>
            <svg viewBox="0 0 16 16"><path d="M2 1v15M3 2h10v7H3z" fill="#fff" stroke="#fff"/><circle cx="11" cy="11" r="5" fill="#d22"/><path d="M9 9l4 4M13 9l-4 4" stroke="#fff" stroke-width="2"/></svg>
        </div>
        <div class="time"><span>20:31</span><span>2015/8/31</span></div>
        <button class="show-desktop" aria-label="Show desktop"></button>
    </footer>
</body>
</html>
```
FILE: styles.css
```css
*, *::before, *::after {
    box-sizing: border-box;
}

body {
    margin: 0;
    height: 100vh;
    display: flex;
    flex-direction: column;
    position: relative;
    overflow: hidden;
    background: #000;
    color: #000;
    font-family: "Noto Sans", "Noto Sans CJK SC", sans-serif;
    font-size: 12px;
}

button, input, select {
    margin: 0;
    padding: 0;
    border: 0;
    border-radius: 0;
    background: none;
    color: inherit;
    font: inherit;
}

a {
    color: inherit;
    text-decoration: none;
}

ul {
    list-style: none;
    margin: 0;
    padding: 0;
}

i {
    font-style: normal;
}

svg {
    display: block;
}

.defs {
    position: absolute;
    width: 0;
    height: 0;
}

/* main window */
.editor {
    flex: 1;
    min-height: 0;
    display: flex;
    flex-direction: column;
    padding-right: 7px;
    background: #f3e2f7;
    border-right: 1px solid #666;
}

.titlebar {
    height: 30px;
    display: flex;
    align-items: center;
    gap: 5px;
    margin-right: -7px;
    border-top: 1px solid #333;
    background: linear-gradient(to bottom, rgba(255, 255, 255, 0) 55%, rgba(250, 235, 250, 0.95) 85%), linear-gradient(to right, #e9d8ec 0, #ddc0e6 24%, #d9a4e4 28%, #5d3a66 31%, #c9a0d2 36%, #7c5488 43%, #dcb8e6 50%, #6b3e7c 56%, #b58ac0 62%, #8d4aa8 72%, #5e3470 77%, #9348ac 84%, #8a5a98 90%, #e0bfe8 94%, #d8b4e2 100%);
    font-size: 13px;
}

.title-icon {
    width: 16px;
    height: 16px;
    margin-left: -8px;
}

.win-buttons {
    display: flex;
    align-self: flex-start;
    margin-left: auto;
    margin-right: 7px;
    border: 1px solid #8a7090;
    border-top: 0;
    border-radius: 0 0 5px 5px;
    overflow: hidden;
}

.win-buttons button {
    width: 28px;
    height: 18px;
    display: grid;
    place-items: center;
    background: rgba(255, 255, 255, 0.25);
    border-right: 1px solid #a890b0;
}

.win-buttons .wide {
    width: 46px;
    border: 0;
}

.win-buttons svg, .glass-close svg {
    width: 14px;
    height: 12px;
    fill: #fff;
    stroke: #555;
}

.top {
    height: 56px;
    display: flex;
    gap: 2px;
    background: #8ababa;
    font-family: "Liberation Serif", serif;
    font-weight: bold;
}

.menubar, .brand {
    background: #9cdada;
    border: 2px solid;
    border-color: #507878 #507878 #507878 #d0f0f0;
}

.menubar {
    flex: 1;
    display: flex;
    align-items: center;
    gap: 18px;
    padding: 0 12px 0 8px;
    border-left: 0;
    font-size: 14px;
}

.menu-help {
    margin-left: auto;
}

.menubar u {
    text-underline-offset: 3px;
}

.brand {
    width: 413px;
    display: flex;
    padding: 2px 2px 0 4px;
    border-color: #507878 #d0f0f0 #d0f0f0 #507878;
}

.logo {
    width: 162px;
    height: 30px;
    margin-top: 9px;
}

.logo text {
    font-family: "Liberation Sans", sans-serif;
    font-size: 31px;
    font-style: italic;
    font-weight: bold;
    fill: #00007c;
}

.product {
    flex: 1;
    display: flex;
    flex-direction: column;
    align-items: center;
    white-space: nowrap;
}

.product strong {
    font-size: 24px;
    line-height: 26px;
}

.product em {
    font-size: 14px;
    line-height: 24px;
}

.clock {
    width: 101px;
    display: flex;
    flex-direction: column;
    align-items: center;
    font: italic bold 15px/15px "Liberation Mono", monospace;
}

.pause {
    width: 10px;
    height: 9px;
    margin: 7px 0 0 50px;
    border: solid red;
    border-width: 0 4px;
}

/* workspace */
.workspace {
    flex: 1;
    min-height: 0;
    display: flex;
    background: #000;
}

.left {
    width: 147px;
    display: flex;
    flex-direction: column;
    padding: 2px 2px 2px 0;
    background: #55cdb0;
    font: bold 15px/17px "Liberation Mono", monospace;
    white-space: nowrap;
}

.job {
    height: 19px;
    background: #9cdada;
    border: 1px solid #000;
    border-left: 0;
}

.matrix {
    margin-top: 3px;
    padding: 2px 2px 2px 0;
    border: 1px solid #000;
    border-left: 0;
}

.matrix button {
    width: 100%;
    height: 22px;
    padding-left: 2px;
    text-align: left;
    background: #9cdada;
    border: 2px solid;
    border-color: #d0f0f0 #507878 #507878 #9cdada;
    border-left: 0;
}

.layers {
    width: 121px;
    display: flex;
    flex-direction: column;
    gap: 3px;
    margin-top: 6px;
    padding: 1px 2px 10px 0;
    border: 2px solid #b4ecdc;
    border-top: 1px solid #000;
    border-left: 0;
    box-shadow: inset -1px -1px #000;
    font-size: 12px;
    line-height: 14px;
}

.group {
    width: 116px;
    padding: 1px 1px 1px 0;
    background: #000;
}

.group li {
    height: 16px;
    display: flex;
    align-items: center;
    gap: 2px;
    padding-left: 1px;
}

.group input {
    appearance: none;
    width: 14px;
    height: 14px;
    border: 2px solid #fff;
    outline: 2px solid #000;
    outline-offset: -4px;
    background: #fff;
}

.group input:checked {
    border-color: #00f;
}

.group i {
    width: 14px;
    height: 14px;
}

.group .red {
    background: red;
}

.group label {
    flex: 1;
    height: 14px;
    display: flex;
    align-items: center;
    justify-content: space-between;
    padding: 0 2px 0 1px;
    background: #9cdada;
}

.group label svg {
    width: 8px;
    height: 8px;
}

.group .green {
    background: #00a47a;
}

.group .gold {
    background: #ffc64c;
}

.group .slate {
    background: #9ab4be;
}

.group .silver {
    background: #d8d8d8;
}

.selected {
    height: 20px;
    margin-top: auto;
    line-height: 17px;
    font-size: 12px;
    background: #ffc64c;
    border: 1px solid #000;
    border-left: 0;
    box-shadow: 0 -3px #b4ecdc;
}

.canvas {
    flex: 1;
    min-width: 0;
    overflow: hidden;
}

.canvas svg, .pop-canvas svg, .overview svg {
    width: 100%;
    height: 100%;
}

.mark-text, .mark-ur {
    font-family: "Liberation Sans", sans-serif;
    font-size: 25px;
}

.mark-ur {
    font-style: italic;
    font-weight: bold;
}

.right {
    width: 164px;
    display: flex;
    flex-direction: column;
}

.tools {
    display: grid;
    grid-template-columns: repeat(4, 1fr);
    border: 2px solid;
    border-color: #2c6e60 #b4ecdc #b4ecdc #2c6e60;
    background: #000;
}

.tools.gray {
    border-color: #888;
}

.tools button {
    width: 39px;
    height: 39px;
    margin-bottom: 1px;
    display: grid;
    place-items: center;
    background: #9cdada;
    border: 2px solid;
    border-color: #d0f0f0 #507878 #507878 #d0f0f0;
}

.tools svg {
    width: 31px;
    height: 31px;
    border: 1px solid #000;
}

.tools.gray button {
    background: #ccc;
    border-color: #eee #777 #777 #eee;
}

.tools.gray .white {
    background: #fff;
    border-color: #fff #999 #999 #fff;
}

.tools.gray .gold {
    background: #ffc64c;
    border-color: #ffe4a4 #8a6a20 #8a6a20 #ffe4a4;
}

.tools .alert svg {
    outline: 2px solid red;
}

.overview {
    flex: 1;
    min-height: 0;
    border: 2px solid;
    border-color: #2c6e60 #b4ecdc #b4ecdc #2c6e60;
}

.coords {
    height: 44px;
    display: flex;
    flex-direction: column;
    justify-content: center;
    padding-left: 2px;
    background: #55cdb0;
    border: 2px solid;
    border-color: #2c6e60 #b4ecdc #b4ecdc #2c6e60;
    font: bold 15px/15px "Liberation Mono", monospace;
}

/* command line and status */
.command {
    height: 35px;
    display: flex;
    align-items: stretch;
    padding: 2px 0;
    background: #000;
    font: bold 12px "Liberation Mono", monospace;
}

.command > button {
    width: 32px;
    display: grid;
    place-items: center;
    background: #ffffcc;
    border: 2px solid;
    border-color: #fff #a8a480 #a8a480 #fff;
    margin-right: 1px;
}

.command > button:first-child {
    width: 25px;
}

.command > .on {
    width: 29px;
    border: 3px solid #55cdb0;
    margin: 0;
}

.command svg {
    width: 22px;
    height: 22px;
    border: 1px solid #000;
}

.command label {
    width: 48px;
    padding-left: 2px;
    line-height: 31px;
    background: #ffffcc;
    white-space: nowrap;
}

.command input {
    flex: 1;
    min-width: 0;
    background: #ffffcc;
    border-left: 1px solid #000;
}

.units {
    width: 79px;
    margin-left: 2px;
    padding: 2px 2px 2px 6px;
    background: #55cdb0;
}

.units button {
    width: 100%;
    height: 27px;
    display: flex;
    align-items: center;
    justify-content: space-between;
    padding: 0 5px;
    border: 2px solid;
    border-color: #b4ecdc #2c6e60 #2c6e60 #b4ecdc;
    font-size: 15px;
}

.units i {
    width: 12px;
    height: 7px;
    border: 2px solid;
    border-color: #b4ecdc #2c6e60 #2c6e60 #b4ecdc;
}

.status {
    height: 31px;
    padding: 2px 3px 3px 0;
    background: #d8ffff;
    border-top: 2px solid #608c8c;
}

.status output {
    height: 24px;
    display: block;
    padding-left: 761px;
    background: #b4ffff;
    border: 2px solid;
    border-color: #dff #608c8c #608c8c #dff;
    outline: 1px solid #000;
    font: bold 12px/20px "Liberation Mono", monospace;
}

/* popview window */
.popview, .excel {
    position: absolute;
    border: 1px solid #bbb;
    border-radius: 7px;
    box-shadow: 0 0 3px #000;
}

.popview {
    left: 981px;
    top: 110px;
    width: 345px;
    display: flex;
    flex-direction: column;
    padding: 0 7px 5px 5px;
    background: linear-gradient(to right, #555 0, #3a3a3a 20%, #050505 55%, #333 82%, #9fb4c0 86%, #b4a4b4 100%);
}

.popview header, .excel header {
    height: 27px;
    display: flex;
    align-items: center;
    gap: 5px;
    font-size: 13px;
    line-height: 16px;
}

.popview header span, .excel header span {
    text-shadow: 0 0 6px #bbb, 0 0 8px #bbb, 0 0 10px #999;
}

.app-icon {
    width: 15px;
    height: 15px;
}

.popview .app-icon, .excel .app-icon {
    margin-left: 1px;
}

.glass-close {
    width: 46px;
    height: 19px;
    display: grid;
    place-items: center;
    align-self: flex-start;
    margin-left: auto;
    background: rgba(255, 255, 255, 0.3);
    border: 1px solid #ccc;
    border-top: 0;
    border-radius: 0 0 5px 5px;
}

.pop-body {
    display: flex;
    border-top: 1px solid #000;
    background: #000;
    outline: 1px solid #999;
}

.pop-canvas {
    flex: 1;
    height: 261px;
    margin-left: 1px;
    border: 3px solid;
    border-color: #2c6e60 #b4ecdc #b4ecdc #2c6e60;
}

.pop-tools {
    width: 36px;
    display: flex;
    flex-direction: column;
    margin-left: 1px;
    background: #55cdb0;
}

.pop-tools button {
    height: 35px;
    display: grid;
    place-items: center;
    background: #9cdada;
    border: 2px solid;
    border-color: #d0f0f0 #507878 #507878 #d0f0f0;
    outline: 1px solid #000;
    box-shadow: inset 0 0 0 1px #55cdb0;
}

.pop-tools svg {
    width: 23px;
    height: 23px;
    border: 1px solid #000;
}

.pop-close {
    padding: 2px;
    background: #55cdb0;
    border: 1px solid #000;
    outline: 1px solid #999;
}

.pop-close button {
    width: 100%;
    height: 24px;
    background: #9cdada;
    border: 2px solid;
    border-color: #d0f0f0 #507878 #507878 #d0f0f0;
    font: bold 15px "Liberation Mono", monospace;
}

/* excel window */
.excel {
    left: 151px;
    top: 385px;
    bottom: 40px;
    width: 624px;
    display: flex;
    flex-direction: column;
    padding: 0 6px;
    overflow: hidden;
    border-bottom: 0;
    border-radius: 7px 7px 0 0;
    background: linear-gradient(to right, #666 0, #888 20%, #444 38%, #241012 44%, #3c1015 54%, #1c0808 60%, #3c1015 70%, #1c0808 76%, #55484a 82%, #8a5a5a 100%);
}

.excel .win-buttons {
    margin-right: -2px;
    border-color: #ccc;
}

.excel .win-buttons .wide {
    background: linear-gradient(to bottom, #d08070, #b02a10 50%, #d05030);
}

.excel-body {
    flex: 1;
    min-height: 0;
    display: flex;
    flex-direction: column;
    border: 1px solid #111;
    border-bottom: 0;
    background: linear-gradient(to right, #9ebcf4, #bed4fb);
}

.excel-menu {
    height: 27px;
    display: flex;
    align-items: center;
    gap: 17px;
    padding: 0 10px 0 5px;
}

.excel-menu u {
    text-underline-offset: 2px;
}

.excel-menu.second {
    height: 24px;
    padding-right: 5px;
}

.excel-menu .grip {
    margin-right: -13px;
}

.excel-menu.second .grip {
    margin-right: -7px;
}

.book {
    width: 18px;
    height: 18px;
    margin-right: -10px;
}

.mdi {
    width: 46px;
    height: 12px;
    margin-left: auto;
}

.grip {
    width: 2px;
    height: 16px;
    flex: none;
    background: repeating-linear-gradient(to bottom, #27418a 0, #27418a 2px, transparent 2px, transparent 4px);
}

.bars {
    display: flex;
    gap: 3px;
    height: 26px;
    margin-bottom: 1px;
    padding-left: 1px;
}

.bar {
    display: flex;
    align-items: center;
    gap: 1px;
    padding-left: 3px;
    background: linear-gradient(to bottom, #dfeaff, #bcd3f8 60%, #86aae6);
    border-bottom: 1px solid #4a6ea8;
    border-radius: 4px;
}

.bar.grow {
    flex: 1;
}

.bar button {
    width: 22px;
    height: 22px;
    flex: none;
    display: grid;
    place-items: center;
}

.bar button svg {
    width: 16px;
    height: 16px;
}

.bar .on {
    background: #ffb35c;
    border: 1px solid #000080;
}

.bar .serif {
    font: bold 14px "Liberation Serif", serif;
}

.bar .drop {
    width: 33px;
    display: flex;
    align-items: center;
    gap: 5px;
    padding-left: 3px;
}

.bar .drop::after {
    content: "";
    border: 3px solid transparent;
    border-top-color: #000;
    border-bottom: 0;
}

.serif-a span {
    width: 16px;
    font: bold 14px/13px "Liberation Serif", serif;
    color: #34509a;
    border-bottom: 3px solid red;
}

.more {
    align-self: stretch;
    width: 11px;
    height: 100%;
    margin-left: auto;
    border-radius: 0 4px 4px 0;
    background: linear-gradient(to bottom, #7ba0e8, #0a3088);
}

.sep {
    width: 1px;
    height: 18px;
    margin: 0 3px;
    background: #6a8ccb;
}

.bar select {
    height: 21px;
    appearance: none;
    padding-left: 3px;
    background: conic-gradient(from 315deg at 50% 100%, #000 90deg, transparent 0) right 3px center / 8px 4px no-repeat, linear-gradient(#c4d9fb, #c4d9fb) right / 14px 100% no-repeat, #fff;
}

.bar .font {
    width: 152px;
    margin-left: 2px;
}

.bar .size {
    width: 46px;
    margin-left: 1px;
}

.formula {
    height: 19px;
    display: flex;
    align-items: center;
    margin-bottom: 1px;
    padding-left: 1px;
    font: 13px/18px "Liberation Mono", monospace;
}

.name-box {
    width: 106px;
    height: 19px;
    background: #fff;
    text-align: center;
}

.formula .arrow {
    margin-left: 6px;
    border: 4px solid transparent;
    border-top-color: #000;
    border-bottom: 0;
}

.formula em {
    margin-left: auto;
    margin-right: 5px;
    font: italic bold 14px "Liberation Serif", serif;
}

.formula-text {
    width: 421px;
    height: 19px;
    padding-left: 11px;
    background: #fff;
}

.zh {
    display: inline-block;
    height: 16px;
    font-family: "Noto Sans CJK SC", sans-serif;
    font-size: 16px;
    font-weight: 300;
    line-height: 16px;
    vertical-align: top;
}

.sheet {
    flex: 1;
    min-height: 0;
    display: flex;
    overflow: hidden;
    margin-left: 1px;
    background: #fff;
    border-top: 1px solid #666;
}

.sheet table {
    flex: 1;
    table-layout: fixed;
    border-collapse: separate;
    border-spacing: 0;
    align-self: flex-start;
    font: 13px/18px "Liberation Mono", monospace;
}

.sheet th {
    padding: 0;
    font-weight: normal;
    background: #efebde;
    border-right: 1px solid #807c6c;
    border-bottom: 1px solid #807c6c;
}

.sheet th, .sheet td {
    height: 19px;
    line-height: 18px;
    overflow: hidden;
}

.sheet .num {
    width: 34px;
}

.sheet .col-a {
    width: 149px;
}

.sheet .col-b {
    background: #ffc070;
    border-right: 0;
    border-bottom-color: #000080;
    padding-left: 140px;
}

.sheet td {
    padding: 0 2px;
    border-bottom: 1px solid #000;
    white-space: pre;
}

.sheet td + td {
    border-left: 2px solid #000;
    padding-left: 1px;
}

.sheet .marked {
    position: relative;
    overflow: visible;
}

.marked::after {
    content: "";
    position: absolute;
    left: -13px;
    top: -4px;
    width: 83px;
    height: 25px;
    border: 2px solid #e01010;
    box-shadow: 2px 2px 2px rgba(0, 0, 0, 0.4);
}

.scroll {
    width: 18px;
    display: flex;
    flex-direction: column;
    align-items: center;
    background: #f0f0f0;
}

.split {
    width: 15px;
    height: 7px;
    background: #eee;
    border: 1px solid #999;
    border-bottom: 1px solid #000;
}

.up {
    margin-top: 7px;
    border: 4px solid transparent;
    border-bottom-color: #444;
    border-top: 0;
}

.thumb {
    width: 15px;
    height: 103px;
    margin-top: 39px;
    border: 1px solid #999;
    border-radius: 2px;
    background: repeating-linear-gradient(to bottom, #666 0, #666 1px, transparent 1px, transparent 3px) center / 6px 7px no-repeat, linear-gradient(to right, #f6f6f6, #c8c8cc);
    box-shadow: inset 0 0 0 1px #fff;
}

/* taskbar */
.taskbar {
    position: relative;
    height: 40px;
    flex: none;
    display: flex;
    align-items: stretch;
    gap: 3px;
    padding-top: 1px;
    background: linear-gradient(to right, #0c2a28 0, #1c5c54 10%, #6a5c68 13%, #8c7f8c 50%, #5c5560 57%, #111 63%, #1a1a1a 72%, #0c0c0c 80%, #1c0c0c 90%, #2a2224 100%);
    border-top: 1px solid #222;
    color: #fff;
}

.start {
    width: 57px;
    display: grid;
    place-items: center;
    padding-right: 3px;
}

.start svg {
    width: 38px;
    height: 38px;
}

.task {
    display: flex;
    border: 1px solid rgba(230, 230, 230, 0.6);
    border-radius: 3px;
    background: linear-gradient(135deg, rgba(255, 255, 255, 0.5), rgba(255, 255, 255, 0.1) 55%, rgba(255, 255, 255, 0.2));
}

.task button {
    width: 58px;
    display: flex;
    align-items: center;
    justify-content: center;
    gap: 4px;
}

.task button + button {
    width: 60px;
    border-left: 1px solid rgba(230, 230, 230, 0.3);
}

.task.five button {
    width: 60px;
}

.task svg {
    width: 32px;
    height: 32px;
    flex: none;
}

.task .active {
    background: rgba(255, 255, 255, 0.35);
}

.pdf-tag {
    font: bold 8px "Liberation Sans", sans-serif;
    fill: #fff;
}

.tray {
    display: flex;
    align-items: center;
    gap: 8px;
    margin-left: auto;
}

.tray svg {
    width: 16px;
    height: 16px;
}

.time {
    width: 74px;
    display: flex;
    flex-direction: column;
    justify-content: center;
    margin-left: 5px;
    text-align: center;
    line-height: 18px;
}

.show-desktop {
    width: 15px;
    border: 1px solid #777;
    background: rgba(255, 255, 255, 0.1);
}
```
